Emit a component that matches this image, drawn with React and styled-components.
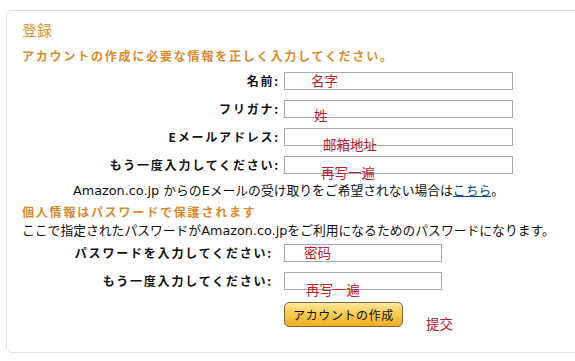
import React from "react";
import styled, { createGlobalStyle } from "styled-components";

const Global = createGlobalStyle`
  html, body { margin: 0; padding: 0; background: #fff; overflow: hidden; }
  body { font-family: "DejaVu Sans", "Noto Sans CJK JP", sans-serif; }
`;

const Page = styled.div`
  width: 575px;
  height: 361px;
  overflow: hidden;
  padding: 10px 0 0 6px;
  box-sizing: border-box;
`;

const Box = styled.div`
  width: 610px;
  height: 343px;
  box-sizing: border-box;
  border: 1px solid #dde2e2;
  border-radius: 6px;
  padding: 8px 0 0 15px;
`;

const Title = styled.h1`
  margin: 0;
  font-family: "Noto Sans CJK JP", sans-serif;
  font-size: 15px;
  line-height: 22px;
  font-weight: 400;
  color: #e0943a;
`;

const Heading = styled.div`
  margin-top: ${(p) => p.$mt || 0}px;
  font-family: "Noto Sans CJK JP", sans-serif;
  font-size: 12px;
  line-height: 14px;
  font-weight: 700;
  letter-spacing: 1.8px;
  color: #d98a2c;
`;

const Grid = styled.div`
  display: grid;
  grid-template-columns: ${(p) => p.$label}px ${(p) => p.$input}px;
  column-gap: ${(p) => p.$gap}px;
  row-gap: 10px;
  margin-top: ${(p) => p.$mt}px;
  align-items: center;
`;

const Label = styled.label`
  text-align: right;
  font-family: "Noto Sans CJK JP", sans-serif;
  font-size: 12px;
  line-height: 18px;
  font-weight: 700;
  letter-spacing: 1.8px;
  color: #111;
  white-space: nowrap;
`;

const Field = styled.div`
  position: relative;
  height: 18px;
`;

const Input = styled.input`
  display: block;
  width: 100%;
  height: 18px;
  box-sizing: border-box;
  border: 1px solid #a9a9a9;
  background: #fff;
  margin: 0;
  padding: 0;
  outline: none;
`;

const Note = styled.span`
  position: absolute;
  left: ${(p) => p.$x}px;
  top: ${(p) => p.$y}px;
  font-family: "Noto Sans CJK SC", sans-serif;
  font-size: 13.5px;
  line-height: 15px;
  color: #b8202a;
  white-space: nowrap;
  pointer-events: none;
`;

const Text = styled.p`
  margin: ${(p) => p.$mt || 0}px 0 0 ${(p) => p.$ml || 0}px;
  font-size: 12.8px;
  line-height: 14px;
  color: #111;
  white-space: nowrap;
  font-family: "DejaVu Sans", "Noto Sans CJK JP", sans-serif;
`;

const Link = styled.a`
  color: #0b4a8c;
  text-decoration: underline;
`;

const ButtonCell = styled.div`
  grid-column: 2;
  position: relative;
  margin-top: 2px;
  height: 25px;
`;

const Button = styled.button`
  width: 119px;
  height: 25px;
  box-sizing: border-box;
  border: 1px solid #7d6a3c;
  border-radius: 5px;
  background: linear-gradient(#fde89a 0%, #f8cc56 45%, #eeac22 100%);
  font-family: "Noto Sans CJK JP", sans-serif;
  font-size: 12px;
  letter-spacing: 0.6px;
  color: #111;
  padding: 0;
  cursor: pointer;
`;

const fields1 = [
  { label: "名前:", note: "名字", x: 27, y: 1 },
  { label: "フリガナ:", note: "姓", x: 30, y: 8 },
  { label: "Eメールアドレス:", note: "邮箱地址", x: 39, y: 9 },
  { label: "もう一度入力してください:", note: "再写一遍", x: 37, y: 9 },
];

const fields2 = [
  { label: "パスワードを入力してください:", note: "密码", x: 20, y: 1 },
  { label: "もう一度入力してください:", note: "再写一遍", x: 22, y: 10 },
];

export default function App() {
  return (
    <>
      <Global />
      <Page>
        <Box>
          <Title>登録</Title>
          <Heading $mt={8}>アカウントの作成に必要な情報を正しく入力してください。</Heading>
          <Grid $label={258} $input={229} $gap={4} $mt={9}>
            {fields1.map((f, i) => (
              <React.Fragment key={i}>
                <Label>{f.label}</Label>
                <Field>
                  <Input type="text" />
                  <Note $x={f.x} $y={f.y}>{f.note}</Note>
                </Field>
              </React.Fragment>
            ))}
          </Grid>
          <Text $mt={10} $ml={51}>
            Amazon.co.jp からのEメールの受け取りをご希望されない場合は<Link href="#">こちら</Link>。
          </Text>
          <Heading $mt={7}>個人情報はパスワードで保護されます</Heading>
          <Text $mt={5}>ここで指定されたパスワードがAmazon.co.jpをご利用になるためのパスワードになります。</Text>
          <Grid $label={251} $input={158} $gap={11} $mt={6}>
            {fields2.map((f, i) => (
              <React.Fragment key={i}>
                <Label>{f.label}</Label>
                <Field>
                  <Input type="password" />
                  <Note $x={f.x} $y={f.y}>{f.note}</Note>
                </Field>
              </React.Fragment>
            ))}
            <ButtonCell>
              <Button type="button">アカウントの作成</Button>
              <Note $x={142} $y={14}>提交</Note>
            </ButtonCell>
          </Grid>
        </Box>
      </Page>
    </>
  );
}
